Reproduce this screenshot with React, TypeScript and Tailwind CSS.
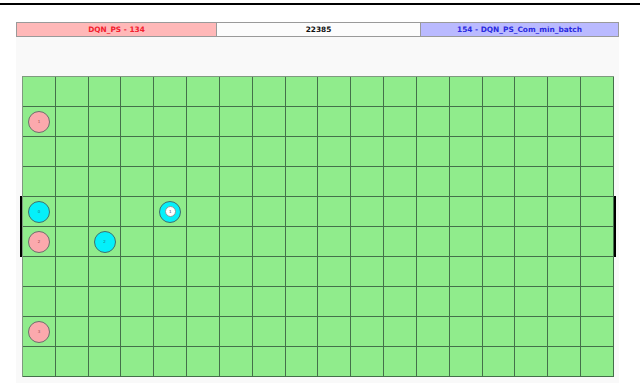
const COLS = 18;
const ROWS = 10;

type Agent = { row: number; col: number; kind: "pink" | "cyan" | "cyanTarget"; label: string };

const agents: Agent[] = [
  { row: 1, col: 0, kind: "pink", label: "1" },
  { row: 4, col: 0, kind: "cyan", label: "0" },
  { row: 4, col: 4, kind: "cyanTarget", label: "1" },
  { row: 5, col: 0, kind: "pink", label: "2" },
  { row: 5, col: 2, kind: "cyan", label: "2" },
  { row: 8, col: 0, kind: "pink", label: "3" },
];

const Token = ({ agent }: { agent: Agent }) => {
  if (agent.kind === "pink") {
    return (
      <div className="w-[22px] h-[22px] rounded-full bg-[#fba9ad] border border-[#6d6d6d] flex items-center justify-center">
        <span className="text-[4px] leading-none text-[#9a4a50]">{agent.label}</span>
      </div>
    );
  }
  if (agent.kind === "cyan") {
    return (
      <div className="w-[22px] h-[22px] rounded-full bg-[#05f0fa] border border-[#3f6f6f] flex items-center justify-center">
        <span className="text-[4px] leading-none text-[#1d7c80]">{agent.label}</span>
      </div>
    );
  }
  return (
    <div className="w-[22px] h-[22px] rounded-full bg-[#05f0fa] border border-[#3f6f6f] flex items-center justify-center">
      <div className="w-[11px] h-[11px] rounded-full bg-white border border-[#8a9a9a] flex items-center justify-center">
        <span className="text-[4px] leading-none text-[#444]">{agent.label}</span>
      </div>
    </div>
  );
};

const App = () => {
  const cells = [];
  for (let r = 0; r < ROWS; r++) {
    for (let c = 0; c < COLS; c++) {
      const a = agents.find((x) => x.row === r && x.col === c);
      cells.push(
        <div
          key={`${r}-${c}`}
          className="border-r border-b border-[#44704a] flex items-center justify-center"
        >
          {a && <Token agent={a} />}
        </div>
      );
    }
  }

  return (
    <div className="w-[640px] h-[385px] bg-white overflow-hidden font-['DejaVu_Sans',sans-serif]">
      {/* top rule from page */}
      <div className="pt-[3px]">
        <div className="h-[2px] bg-black" />
      </div>

      <div className="ml-[16px] mt-[17px] w-[603px]">
        {/* scores bar */}
        <div className="flex h-[15px] text-[7.4px] font-bold leading-none">
          <div className="w-[201px] bg-[#ffb8b8] border border-[#9a9a9a] text-[#f2202e] flex items-center justify-center">
            DQN_PS - 134
          </div>
          <div className="w-[203px] bg-[#fcfcfc] border-y border-[#9a9a9a] text-[#111] flex items-center justify-center">
            22385
          </div>
          <div className="w-[199px] bg-[#babaff] border border-[#9a9a9a] text-[#2a2ae0] flex items-center justify-center">
            154 - DQN_PS_Com_min_batch
          </div>
        </div>

        {/* field */}
        <div className="bg-[#f9f9f9] pt-[39px] pb-[6px] pl-[6px] h-[346px]">
          <div className="relative w-[592px] h-[301px]">
            <div className="grid grid-cols-[repeat(18,1fr)] grid-rows-[repeat(10,1fr)] w-full h-full bg-[#90ec8c] border-l border-t border-[#7f9a7f]">
              {cells}
            </div>
            <div className="absolute left-[-2px] top-[120px] w-[2px] h-[61px] bg-black" />
            <div className="absolute right-[-2px] top-[120px] w-[2px] h-[61px] bg-black" />
          </div>
        </div>
      </div>
    </div>
  );
};

export default App;
